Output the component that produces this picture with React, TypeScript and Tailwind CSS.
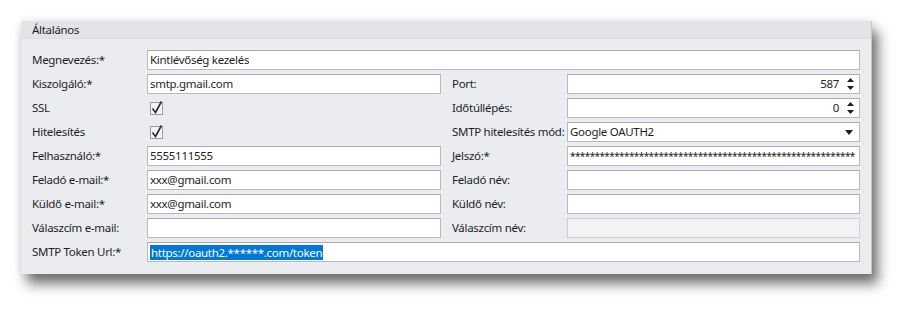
import type { ReactNode } from "react";

const font = { fontFamily: '"Noto Sans", "Open Sans", sans-serif' };

function Label({ children }: { children: ReactNode }) {
  return <div className="w-[115px] shrink-0 whitespace-nowrap text-[11.5px] leading-5 tracking-[-0.3px] text-[#1e1e1e]">{children}</div>;
}

function Field({ value, disabled, children }: { value?: string; disabled?: boolean; children?: ReactNode }) {
  return (
    <div className={`flex h-5 min-w-0 flex-1 items-center overflow-hidden border px-[2px] text-[11.5px] tracking-[-0.3px] text-[#1e1e1e] ${disabled ? "border-[#cfd0d4] bg-[#f3f3f5]" : "border-[#b7b9bf] border-t-[#a9abb1] bg-white"}`}>
      {children ?? <span className="truncate">{value}</span>}
    </div>
  );
}

function Spin({ value }: { value: string }) {
  return (
    <Field>
      <span className="flex-1 pr-[7px] text-right">{value}</span>
      <svg width="9" height="14" viewBox="0 0 9 14" className="mr-[2px] shrink-0">
        <path d="M4.5 1 L8 5 L1 5 Z" fill="#1e1e1e" />
        <path d="M1 9 L8 9 L4.5 13 Z" fill="#1e1e1e" />
      </svg>
    </Field>
  );
}

function Check() {
  return (
    <div className="flex h-5 flex-1 items-center pl-[3px]">
      <svg width="14" height="15" viewBox="0 0 14 15">
        <rect x="0.5" y="1.5" width="12" height="12" fill="#f4f4f6" stroke="#9a9ca2" />
        <path d="M2.5 7.5 L5.5 11.5 L11.5 0.5" fill="none" stroke="#2a2a2a" strokeWidth="1.6" />
      </svg>
    </div>
  );
}

function Row({ children }: { children: ReactNode }) {
  return <div className="flex h-6 items-center">{children}</div>;
}

export default function App() {
  const stars = "*".repeat(58);
  return (
    <main className="h-[317px] w-[915px] bg-white pl-[21px] pt-[21px]" style={font}>
      <section className="w-[851px] border-r border-[#c4c6cb] bg-[#ebecf0] shadow-[0_0_8px_rgba(0,0,0,0.1),6px_10px_12px_rgba(0,0,0,0.55)]">
        <div className="h-[18px] border-b border-[#dcdde2] bg-[#e3e4e8] pl-[11px] text-[11.5px] leading-[17px] tracking-[-0.3px] text-[#1e1e1e]">Általános</div>
        <div className="px-[11px] pb-[10px] pt-[9px]">
          <Row>
            <Label>Megnevezés:*</Label>
            <Field value="Kintlévőség kezelés" />
          </Row>
          {[
            [<><Label>Kiszolgáló:*</Label><Field value="smtp.gmail.com" /></>, <><Label>Port:</Label><Spin value="587" /></>],
            [<><Label>SSL</Label><Check /></>, <><Label>Időtúllépés:</Label><Spin value="0" /></>],
            [
              <><Label>Hitelesítés</Label><Check /></>,
              <>
                <Label>SMTP hitelesítés mód:</Label>
                <Field>
                  <span className="flex-1">Google OAUTH2</span>
                  <svg width="8" height="5" viewBox="0 0 8 5" className="mr-[4px] shrink-0"><path d="M0 0 L8 0 L4 5 Z" fill="#1e1e1e" /></svg>
                </Field>
              </>,
            ],
            [<><Label>Felhasználó:*</Label><Field value="5555111555" /></>, <><Label>Jelszó:*</Label><Field><span className="whitespace-nowrap text-[10px] tracking-[-0.6px]">{stars}</span></Field></>],
            [<><Label>Feladó e-mail:*</Label><Field value="xxx@gmail.com" /></>, <><Label>Feladó név:</Label><Field /></>],
            [<><Label>Küldő e-mail:*</Label><Field value="xxx@gmail.com" /></>, <><Label>Küldő név:</Label><Field /></>],
            [<><Label>Válaszcím e-mail:</Label><Field /></>, <><Label>Válaszcím név:</Label><Field disabled /></>],
          ].map(([l, r], i) => (
            <Row key={i}>
              <div className="flex w-[409px] shrink-0 items-center">{l}</div>
              <div className="ml-[11px] flex min-w-0 flex-1 items-center">{r}</div>
            </Row>
          ))}
          <Row>
            <Label>SMTP Token Url:*</Label>
            <Field>
              <span className="bg-[#0078d7] px-[1px] leading-[15px] text-white">https://oauth2.******.com/token</span>
            </Field>
          </Row>
        </div>
      </section>
    </main>
  );
}
